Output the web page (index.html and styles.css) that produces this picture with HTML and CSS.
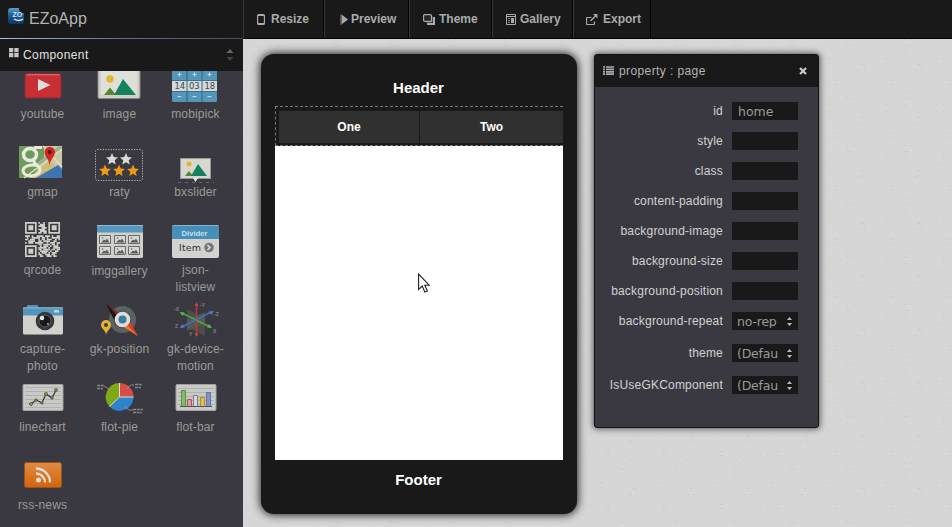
FILE: index.html
```html
<!DOCTYPE html>
<html lang="en">
<head>
<meta charset="utf-8">
<title>EZoApp</title>
<link rel="stylesheet" href="styles.css">
</head>
<body>
<div class="app">
  <aside class="sidebar">
    <div class="brand">
      <svg class="logo" width="17" height="17" viewBox="8 8 17 17"><defs><linearGradient id="lg" x1="0" y1="0" x2="0" y2="1"><stop offset="0" stop-color="#5a9fca"/><stop offset=".45" stop-color="#1d5d94"/><stop offset="1" stop-color="#0b3864"/></linearGradient></defs><path d="M11 8h8c0 3 1 5 5 5v8q0 3-3 3H11q-3 0-3-3V11q0-3 3-3z" fill="url(#lg)"/><text x="12.5" y="16.500" class="logo-text">ZO</text><path d="M14 19q5 3 9 0" stroke="#e4edf5" stroke-width="1.400" fill="none"/></svg>
      <span>EZoApp</span>
    </div>
    <div class="section-head">
      <svg width="10" height="10" viewBox="0 0 10 10" fill="#c4c4c4"><path d="M0 0h4.300v4.300H0zM5.300 0h4.300v4.300H5.300zM0 5h4.300v4.300H0zM5.300 5h4.300v4.300H5.300z"/></svg>
      <span>Component</span>
      <svg class="sorter" width="8" height="12" viewBox="0 0 8 12" fill="#666"><path d="M.5 4 4 0l3.500 4z"/><path d="M.5 8 4 12l3.500-4z" fill="#444"/></svg>
    </div>
    <div class="viewport">
      <div class="components">
        <div class="cell"><svg viewBox="4 65 77 40"><rect x="25" y="73.500" width="36" height="24.500" rx="2" fill="#c72f34" stroke="#8e2a2f"/><path d="M26.500 74.800h33" stroke="#ec7272"/><path d="M38 79v12l12.500-6z" fill="#dcdcdc"/></svg><span>youtube</span></div>
        <div class="cell"><svg viewBox="81 65 77 40"><rect x="98" y="69" width="42" height="29.500" rx="1.500" fill="#d0d1c9" stroke="#84867f"/><rect x="101" y="71" width="36" height="24" fill="#dedfd9"/><circle cx="110" cy="79" r="3.700" fill="#dfb62c"/><path d="m104 95 6-7.500 6 7.500z" fill="#57862c"/><path d="m114 95 9-16 13 16z" fill="#14825e"/></svg><span>image</span></div>
        <div class="cell"><svg viewBox="158 65 75 40"><rect x="172" y="68" width="45" height="34" rx="1.500" fill="#5396ba"/><path d="M172 80h45v11h-45z" fill="#d6d9d8"/><path d="M187 68v34M202 68v34" stroke="#2f6786"/><path d="M179.500 72.500v4M177.500 74.500h4M194.500 72.500v4M192.500 74.500h4M209.500 72.500v4M207.500 74.500h4M177.500 96.500h4M192.500 96.500h4M207.500 96.500h4" stroke="#c5dce6" stroke-width="1.200"/><path d="M172 80.500h45M172 91.500h45" stroke="#397292"/><text class="pick" x="174.500" y="89">14</text><text class="pick" x="189" y="89">03</text><text class="pick" x="204.500" y="89">18</text></svg><span>mobipick</span></div>

        <div class="cell"><svg viewBox="4 143 77 40"><path d="M19 146h43v32H19z" fill="#cbc7a8"/><path d="M19 146h25v13L32 178H19z" fill="#6f9b59"/><path d="m36 166 25-19" stroke="#9faf8b" stroke-width="4"/><path d="m29 178 21-17 12 15v2z" fill="#d1ba74"/><path d="M36 178 58 165l4 4v9z" fill="#3c75b0"/><path d="m43 146 19 21M24 178l38-29" stroke="#e3ddb8" stroke-width="1.500"/><ellipse cx="30" cy="154.500" rx="6.500" ry="6" fill="none" stroke="#e7ebe2" stroke-width="3.500"/><path d="M34 147.500h8M35 160c-4 4 5 4 5 10 0 7-16 8-17 1 0-5 7-7 14-5.500" stroke="#e7ebe2" stroke-width="3" fill="none"/><path d="M49.500 166c0-7-5-9-5-14a5.200 5.200 0 0 1 10.500 0c0 5-5 7-5.500 14z" fill="#cf2722"/><circle cx="49.700" cy="152" r="2" fill="#5b1414"/></svg><span>gmap</span></div>
        <div class="cell"><svg viewBox="81 143 77 40"><rect x="95.500" y="149.500" width="47" height="31" rx="2" fill="none" stroke="#b2b2ad" stroke-dasharray="1.300 1.300"/><defs><path id="star" d="m0-6 1.700 4 4.300.4-3.300 2.900 1 4.300L0 3.300l-3.700 2.300 1-4.300L-6-1.600-1.700-2z"/></defs><g fill="#dadbd5"><use href="#star" x="112" y="159"/><use href="#star" x="126" y="159"/></g><g fill="#f09a13"><use href="#star" x="105" y="170.500"/><use href="#star" x="119" y="170.500"/><use href="#star" x="133" y="170.500"/></g></svg><span>raty</span></div>
        <div class="cell"><svg viewBox="158 143 75 40"><rect x="180.500" y="158.500" width="30" height="20" fill="#d6d7d1" stroke="#989a94"/><circle cx="189" cy="164" r="2.500" fill="#dfb62c"/><path d="m185 176 4-5 4 5z" fill="#57862c"/><path d="m191 176 7-12 9 12z" fill="#14825e"/><path d="M193 178h5l-2.500 4z" fill="#e6e6e2"/><path d="M178 182.500h36" stroke="#66696b" stroke-dasharray="3 4"/></svg><span>bxslider</span></div>

        <div class="cell"><svg viewBox="4 221 77 40"><g transform="translate(25 222) scale(1.667)"><g fill="none" stroke="#cfcfc8"><path d="M.5.500h6v6h-6zM14.500.500h6v6h-6zM.5 14.500h6v6h-6z"/><path d="M8 .5h5" stroke-dasharray="1 2"/><path d="M9 1.500h3M8 2.500h4M10 3.500h3M8 4.500h4M9 5.500h4M8 6.500h2M11 6.500h2"/><path d="M0 8.500h21" stroke-dasharray="3 1 1 2 4 1"/><path d="M1 9.500h20" stroke-dasharray="1 2 5 1 2 1"/><path d="M0 10.500h21" stroke-dasharray="2 1 3 2 1 1"/><path d="M2 11.500h18" stroke-dasharray="4 2 2 1"/><path d="M0 12.500h21" stroke-dasharray="1 1 3 1 5 2"/><path d="M8 13.500h12M8 16.500h13" stroke-dasharray="2 1 4 1"/><path d="M9 14.500h11M8 18.500h12" stroke-dasharray="1 1 3 1"/><path d="M8 15.500h13M9 17.500h11" stroke-dasharray="5 1 1 2"/><path d="M8 19.500h10M9 20.500h12" stroke-dasharray="2 2 3 1"/></g><path d="M2 2h3v3H2zM16 2h3v3h-3zM2 16h3v3H2z" fill="#cfcfc8"/></g></svg><span>qrcode</span></div>
        <div class="cell low"><svg viewBox="81 221 77 40"><rect x="97" y="225" width="46" height="33" rx="1.500" fill="#cfd0cb"/><path d="M97 225h46v7.500H97z" fill="#5597bf"/><path d="M97 225.500h46" stroke="#8dbcd7"/><defs><g id="thumb"><path d="M.5.500h11v8H.5z" fill="#d7d7d3" stroke="#686a69"/><path d="m2 7.500 3-3 1.500 1L8 3.500l2.500 4z" fill="#5c5e5e"/><circle cx="3.500" cy="3" r=".8" fill="#666"/></g></defs><use href="#thumb" x="99" y="235"/><use href="#thumb" x="114" y="235"/><use href="#thumb" x="128" y="235"/><use href="#thumb" x="99" y="246"/><use href="#thumb" x="114" y="246"/><use href="#thumb" x="128" y="246"/></svg><span>imggallery</span></div>
        <div class="cell"><svg viewBox="158 221 75 40"><rect x="172" y="225" width="47" height="33" rx="2" fill="#d2d3d0"/><path d="M174 225h43q2 0 2 2v12h-47v-12q0-2 2-2z" fill="#468fb8"/><path d="M173 225.500h45" stroke="#83b8d2"/><text class="divider" x="181.500" y="235.500">Divider</text><text class="item" x="179" y="251">Item</text><circle cx="209" cy="247.500" r="4.800" fill="#777"/><path d="m207.500 245 2.500 2.500-2.500 2.500" fill="none" stroke="#e4e4e4" stroke-width="1.400"/></svg><span>json-<br>listview</span></div>

        <div class="cell"><svg viewBox="4 300 77 40"><path d="M27 305h11v4H27z" fill="#4e92ba"/><rect x="23" y="307.500" width="40" height="27" rx="1.500" fill="#d2d2cd"/><path d="M23 307.500h40v8H23z" fill="#5395bb"/><path d="M23 308h40" stroke="#84b5ce"/><path d="M54 310h5v2.500h-5z" fill="#b7d5e3"/><circle cx="45" cy="321" r="9.300" fill="#343638"/><circle cx="45" cy="321" r="6" fill="#17191b" stroke="#5a5d5f"/><circle cx="42" cy="318" r="2.200" fill="#e4e5e5"/><circle cx="48" cy="324" r="1.200" fill="#888"/></svg><span>capture-<br>photo</span></div>
        <div class="cell"><svg viewBox="81 300 77 40"><circle cx="122.500" cy="319.500" r="13.500" fill="#5b6264"/><circle cx="122.500" cy="319.500" r="9" fill="#4b5053"/><path d="m106 303 13 13-5 4z" fill="#171314"/><path d="m106 303 15 12-3 2z" fill="#7b2420"/><path d="m129 320 9 16-16-10z" fill="#d9402b"/><path d="m138 336-16-10 3-3z" fill="#ef762a"/><circle cx="122.500" cy="319.500" r="7.800" fill="#dddedb"/><circle cx="122.500" cy="319.500" r="4" fill="#397c9e"/><path d="M106 335c0-5-5-6-5-10a5 5 0 0 1 10 0c0 4-4 5-5 10z" fill="#e3b42f"/><circle cx="106" cy="325" r="2" fill="#3b3a41"/></svg><span>gk-position</span></div>
        <div class="cell"><svg viewBox="158 300 75 40"><path d="m187 309 18 9v18l-18-9z" fill="#4d4d4a"/><path d="m187 320 18-8v11l-18 8z" fill="#5c5d55" opacity=".7"/><path d="M196.500 304v31" stroke="#b63a3a" stroke-width="1.500"/><path d="m196.500 302 2 4h-4zM196.500 337l2-4h-4z" fill="#cb4141"/><path d="m182 313 28 14" stroke="#49a947" stroke-width="1.500"/><path d="m179.500 312 5 .5-2 3.500zM212 328l-5-.5 2-3.500z" fill="#55ba51"/><path d="m182 327 29-15" stroke="#426fba" stroke-width="1.500"/><path d="m179.500 328 5-.500-2-3.500zM214 311l-5 .5 2 3.500z" fill="#4d7fcb"/><g class="axis"><text x="200" y="307">-Y</text><text x="174" y="311">-X</text><text x="214" y="316">-Z</text><text x="175" y="328">Z</text><text x="213" y="333">X</text><text x="189" y="336">Y</text></g></svg><span>gk-device-<br>motion</span></div>

        <div class="cell"><svg viewBox="4 378 77 40"><rect x="23" y="384.500" width="40" height="26" rx="1" fill="#c9cac7" stroke="#a0a29e"/><path d="M25 387.500h36M25 391.500h36M25 395.500h36M25 399.500h36M25 403.500h36M25 407.500h36" stroke="#b0b2af"/><path d="m31 404 5-4 6 3 4-9 6 4 4-8" fill="none" stroke="#353737" stroke-width="1.200"/><g fill="#a5a93b" stroke="#3a3c36" stroke-width=".7"><circle cx="31" cy="404" r="1.500"/><circle cx="36" cy="400" r="1.200"/><circle cx="42" cy="403" r="1.200"/><circle cx="46" cy="394" r="1.500"/><circle cx="52" cy="398" r="1.200"/><circle cx="56" cy="390" r="1.500"/></g></svg><span>linechart</span></div>
        <div class="cell"><svg viewBox="81 378 77 40"><path d="M119.500 397V383a14 14 0 0 1 14 14z" fill="#d94b49"/><path d="M119.500 397h14a14 14 0 0 1-24 9.500z" fill="#2f83cb"/><path d="M119.500 397V383a14 14 0 0 0-10 23.500z" fill="#7fa816"/><path d="M119.500 383v14h14M119.500 397l-10 9.500" stroke="#dbe0cf" fill="none"/><path d="m104 386 5 3M126 389l5-4h3M125 407l4 3h4" stroke="#9a9a93" fill="none" stroke-width=".8"/><path d="M97 385.500h7M97 388.500h6M135 384.500h7M135 387.500h6M133 409.500h10M133 412.500h9" stroke="#86877f" stroke-width="1.500" stroke-dasharray="3 .7"/></svg><span>flot-pie</span></div>
        <div class="cell"><svg viewBox="158 378 75 40"><rect x="176" y="384.500" width="40" height="26" rx="1" fill="#c9cac7" stroke="#a0a29e"/><path d="M178 388.500h36M178 392.500h36M178 396.500h36M178 400.500h36M178 404.500h36" stroke="#b0b2af"/><path d="M181.500 390.500h4v16h-4z" fill="#86b969" stroke="#5b9344"/><path d="M187.500 399.500h4v7h-4z" fill="#d4a2a4" stroke="#b94e53"/><path d="M193.500 395.500h4v11h-4z" fill="#d7d9da" stroke="#7b7e7f"/><path d="M200.500 397.500h4v9h-4z" fill="#dfc255" stroke="#b58b22"/><path d="M206.500 392.500h4v14h-4z" fill="#8790c6" stroke="#6571b4"/><path d="M180 406.500h32" stroke="#505253"/></svg><span>flot-bar</span></div>

        <div class="cell"><svg viewBox="4 456 77 40"><defs><linearGradient id="rss" x1="0" y1="0" x2="0" y2="1"><stop offset="0" stop-color="#dc8d45"/><stop offset="1" stop-color="#d66208"/></linearGradient></defs><rect x="24.500" y="462.500" width="37" height="25" rx="2" fill="url(#rss)" stroke="#99531a"/><circle cx="38.500" cy="480" r="2.500" fill="#dedbd5"/><path d="M36 473.500a9 9 0 0 1 9 9M36 468.500a14 14 0 0 1 14 14" fill="none" stroke="#dedbd5" stroke-width="2.300"/></svg><span>rss-news</span></div>
      </div>
    </div>
  </aside>

  <div class="workspace">
    <nav class="toolbar">
      <a class="tool resize"><svg width="8" height="11" viewBox="0 0 8 11"><rect x=".6" y=".6" width="6.800" height="9.800" rx="1" fill="none" stroke="#aaa" stroke-width="1.200"/><path d="M1 1.500h6M1 9.500h6" stroke="#aaa"/></svg>Resize</a>
      <a class="tool preview"><svg width="8" height="11" viewBox="0 0 8 11"><path d="M.5 0v11" stroke="#555"/><path d="M1.500.500 8 5.500l-6.500 5z" fill="#aaa"/></svg>Preview</a>
      <a class="tool theme"><svg width="12" height="11" viewBox="0 0 12 11" fill="none"><path d="M11 3v7H4" stroke="#aaa" stroke-width="2"/><path d="M9 2v6H3" stroke="#777"/><rect x=".6" y=".6" width="7.800" height="6.800" rx="1" fill="#292529" stroke="#aaa" stroke-width="1.200"/></svg>Theme</a>
      <a class="tool gallery"><svg width="10" height="11" viewBox="0 0 10 11" fill="none"><path d="M.5.500h9v10h-9z" stroke="#aaa"/><path d="M1 2.500h8" stroke="#aaa"/><path d="M2 4.500h2M2 6.500h2M2 8.500h2" stroke="#888"/><path d="M5 4h3v5H5z" fill="#aaa"/></svg>Gallery</a>
      <a class="tool export"><svg width="12" height="11" viewBox="0 0 12 11" fill="none" stroke="#aaa"><path d="M5.500 3.500h-4q-1 0-1 1v5q0 1 1 1h6q1 0 1-1v-2" stroke-width="1.200"/><path d="m4.500 7 5-5" stroke-width="1.500"/><path d="M7 0h4.500v4.500z" fill="#aaa" stroke="none"/></svg>Export</a>
    </nav>
    <main class="stage">
      <svg class="texture" width="709" height="488"><defs><pattern id="specks" x="33" y="0" width="57" height="53" patternUnits="userSpaceOnUse"><path d="M1 .5h1M7 .5h1M0 4.500h1M1 6.500h1M3 6.500h1M5 6.500h1M1 12.500h1M3 14.500h1M16 12.500h1M25 19.500h1M33 19.500h1M39 19.500h1M40 8.500h1M40 12.500h1M40 24.500h1M15 25.500h2M18 27.500h1M11 31.500h1M13 31.500h1M18 31.500h1M10 39.500h1M2 36.500h1M47 33.500h1M45 41.500h1M47 41.500h1M28 43.500h1M35 44.500h1M45 45.500h1M47 45.500h1M55 45.500h1M21 51.500h1M11 50.500h1" stroke="#c5cac3"/></pattern></defs><rect width="709" height="488" fill="url(#specks)"/></svg>
      <section class="phone">
        <h1>Header</h1>
        <div class="screen">
          <div class="navbar"><div>One</div><div>Two</div></div>
        </div>
        <h1 class="foot">Footer</h1>
      </section>
      <section class="panel">
        <header><svg width="11" height="9" viewBox="0 0 11 9"><path d="M0 1h2M3 1h8M0 3.400h2M3 3.400h8M0 5.800h2M3 5.800h8M0 8.200h2M3 8.200h8" stroke="#aaa" stroke-width="1.700"/></svg><span>property : page</span><svg class="close" width="8" height="8" viewBox="0 0 8 8"><path d="m1 1 6 6M7 1 1 7" stroke="#ccc" stroke-width="2.200"/></svg></header>
        <div class="form">
          <div class="row"><label>id</label><div class="field">home</div></div>
          <div class="row"><label>style</label><div class="field"></div></div>
          <div class="row"><label>class</label><div class="field"></div></div>
          <div class="row"><label>content-padding</label><div class="field"></div></div>
          <div class="row"><label>background-image</label><div class="field"></div></div>
          <div class="row"><label>background-size</label><div class="field"></div></div>
          <div class="row"><label>background-position</label><div class="field"></div></div>
          <div class="row pick-row"><label>background-repeat</label><div class="field select"><span>no-rep</span><svg width="5" height="9" viewBox="0 0 5 9" fill="#bbb"><path d="M0 3 2.500 0 5 3zM0 6l2.500 3L5 6z"/></svg></div></div>
          <div class="row pick-row"><label>theme</label><div class="field select"><span>(Defau</span><svg width="5" height="9" viewBox="0 0 5 9" fill="#bbb"><path d="M0 3 2.500 0 5 3zM0 6l2.500 3L5 6z"/></svg></div></div>
          <div class="row pick-row"><label>IsUseGKComponent</label><div class="field select"><span>(Defau</span><svg width="5" height="9" viewBox="0 0 5 9" fill="#bbb"><path d="M0 3 2.500 0 5 3zM0 6l2.500 3L5 6z"/></svg></div></div>
        </div>
      </section>
      <svg class="cursor" width="12" height="20" viewBox="0 0 12 20"><path d="M.6 1v15.500L4.300 13l2.500 6 2.600-1-2.600-5.700h4.600z" fill="#fff" stroke="#222" stroke-width="1.100"/></svg>
    </main>
  </div>
</div>
</body>
</html>
```
FILE: styles.css
```css
* { box-sizing: border-box; }
body {
  margin: 0;
  width: 952px;
  height: 527px;
  overflow: hidden;
  font: 12px/17px "Liberation Sans", Arial, sans-serif;
  background: #d6d6d6;
}
svg { flex: none; }
.app { display: flex; height: 527px; }

/* Sidebar */
.sidebar {
  width: 243px;
  display: flex;
  flex-direction: column;
  background: #3a3941;
}
.brand {
  height: 39px;
  display: flex;
  align-items: flex-start;
  padding: 8px 0 0 8px;
  gap: 4px;
  background: #191919;
  border-bottom: 1px solid;
  border-image: linear-gradient(90deg, #a8c4dc, #5f7186 50%, #4b4a60) 1;
  color: #b4b4b4;
  font-size: 16px;
  line-height: 21px;
}
.logo-text { font: bold 7px "Liberation Sans", sans-serif; fill: #d5e3ee; }
.section-head {
  height: 32px;
  display: flex;
  align-items: center;
  gap: 4px;
  padding: 0 9px;
  background: #191919;
  color: #e2e2e2;
  letter-spacing: .4px;
}
.section-head > svg:first-child { margin-top: -4px; }
.sorter { margin-left: auto; }
.viewport { flex: 1; overflow: hidden; }
.components {
  display: grid;
  grid-template-columns: 77px 77px 75px;
  grid-template-rows: 78px 78px 79px 78px 78px 78px;
  margin: -6px 0 0 4px;
}
.cell {
  display: flex;
  flex-direction: column;
  align-items: center;
  text-align: center;
  color: #9b9b97;
  letter-spacing: .15px;
}
.cell svg { width: 100%; height: 40px; }
.cell span { padding-top: 1px; }
.cell.low span { padding-top: 2px; }
.pick { font: 8.500px "DejaVu Sans", sans-serif; fill: #444; letter-spacing: -.1px; }
.divider { font: bold 7.500px "Liberation Sans", sans-serif; fill: #c9e0eb; letter-spacing: .1px; }
.item { font: 9.500px "DejaVu Sans", sans-serif; fill: #333; }
.axis { font: bold 5px "Liberation Sans", sans-serif; fill: #85857f; }

/* Toolbar */
.workspace { flex: 1; display: flex; flex-direction: column; }
.toolbar {
  height: 39px;
  display: flex;
  background: #191919;
  border-bottom: 1px solid #000;
}
.tool {
  display: flex;
  align-items: center;
  gap: 6px;
  border-right: 1px solid #000;
  border-left: 1px solid #38383e;
  color: #aaa;
  font-weight: bold;
}
.resize { width: 81px; padding-left: 13px; }
.preview { width: 85px; padding-left: 15px; gap: 3px; }
.theme { width: 83px; padding-left: 13px; gap: 4px; }
.gallery { width: 81px; padding-left: 13px; gap: 4px; }
.export { width: 78px; padding-left: 12px; gap: 5px; }
.tool svg { margin-top: 1px; }

/* Stage */
.stage {
  position: relative;
  flex: 1;
  display: flex;
  align-items: flex-start;
  gap: 17px;
  padding: 15px 0 0 18px;
}
.texture { position: absolute; left: 0; top: 0; }
.phone {
  position: relative;
  width: 316px;
  height: 460px;
  padding: 17px 14px 0;
  border-radius: 13px;
  background: #191919;
  box-shadow: 0 0 8px 1px #222;
  color: #fff;
  text-align: center;
}
h1 { margin: 0; padding-right: 1px; font-size: 15px; line-height: 34px; font-weight: bold; }
.phone h1 { height: 35px; }
.screen { height: 354px; background: #fff; overflow: hidden; }
.navbar {
  display: grid;
  grid-template-columns: 140px 143px;
  gap: 1px;
  height: 40px;
  padding: 4px 0 3px 3px;
  border: 1px dashed #777;
  border-right: 0;
  background: #191919;
  font-weight: bold;
  line-height: 32px;
}
.navbar div { background: #303030; }
.phone .foot { line-height: 39px; }

.panel {
  position: relative;
  width: 225px;
  height: 374px;
  border: 1px solid #111;
  border-radius: 3px;
  background: #3a3941;
  box-shadow: 0 0 6px 1px #555;
}
.panel header {
  display: flex;
  align-items: center;
  height: 32px;
  padding: 0 11px 0 8px;
  gap: 5px;
  background: #191919;
  color: #b4b4b4;
  letter-spacing: .4px;
}
.panel header svg:first-child { margin-top: -2px; }
.panel header .close { margin: -1px 0 0 auto; }
.form { padding: 15px 20px 0 0; }
.row {
  display: flex;
  justify-content: flex-end;
  align-items: center;
  height: 18px;
  gap: 9px;
  margin-bottom: 12px;
  color: #d2d2d2;
  letter-spacing: .2px;
}
.pick-row { margin-bottom: 14px; }
.pick-row label { padding-top: 1px; }
.field {
  width: 66px;
  height: 18px;
  padding-left: 6px;
  background: #191919;
  color: #999;
  font: 12.500px/19px "DejaVu Sans", sans-serif;
  letter-spacing: 0;
}
.select {
  display: flex;
  align-items: center;
  justify-content: space-between;
  padding: 0 6px 0 5px;
}
.select span {
  width: 44px;
  height: 14px;
  line-height: 16px;
  letter-spacing: -.2px;
  overflow: hidden;
  white-space: nowrap;
}
.cursor { position: absolute; left: 175px; top: 234px; }
```
